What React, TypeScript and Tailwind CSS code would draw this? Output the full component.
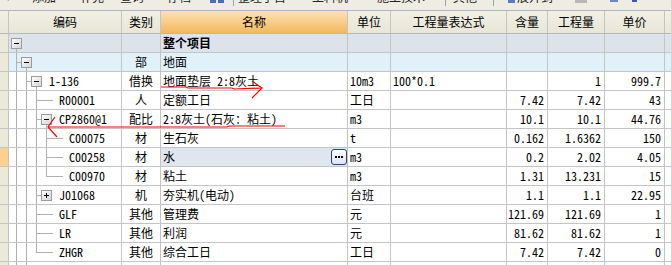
import React from 'react';

type Row = {
  level: number;
  box?: '-' | '+';
  guides: number[];
  half?: number;
  expanded?: boolean;
  code?: string;
  type?: string;
  name?: string;
  bold?: boolean;
  unit?: string;
  expr?: string;
  hl?: string;
  qty?: string;
  price?: string;
  bg?: string;
  selected?: boolean;
};

const rows: Row[] = [
  { level: 0, box: '-', guides: [], expanded: true, name: '整个项目', bold: true, bg: 'bg-[#dce3eb]' },
  { level: 1, box: '-', guides: [0], expanded: true, type: '部', name: '地面', bg: 'bg-[#e1f1f9]' },
  { level: 2, box: '-', guides: [0, 1], expanded: true, code: '1-136', type: '借换', name: '地面垫层 2:8灰土', unit: '10m3', expr: '100*0.1', qty: '1', price: '999.7' },
  { level: 3, guides: [0, 1, 2], code: 'R00001', type: '人', name: '定额工日', unit: '工日', hl: '7.42', qty: '7.42', price: '43' },
  { level: 3, box: '-', guides: [0, 1, 2], expanded: true, code: 'CP2860@1', type: '配比', name: '2:8灰土(石灰：粘土)', unit: 'm3', hl: '10.1', qty: '10.1', price: '44.76' },
  { level: 4, guides: [0, 1, 2, 3], code: 'C00075', type: '材', name: '生石灰', unit: 't', hl: '0.162', qty: '1.6362', price: '150' },
  { level: 4, guides: [0, 1, 2, 3], code: 'C00258', type: '材', name: '水', unit: 'm3', hl: '0.2', qty: '2.02', price: '4.05', selected: true },
  { level: 4, guides: [0, 1, 2], half: 3, code: 'C00970', type: '材', name: '粘土', unit: 'm3', hl: '1.31', qty: '13.231', price: '15' },
  { level: 3, box: '+', guides: [0, 1, 2], code: 'J01068', type: '机', name: '夯实机(电动)', unit: '台班', hl: '1.1', qty: '1.1', price: '22.95' },
  { level: 3, guides: [0, 1, 2], code: 'GLF', type: '其他', name: '管理费', unit: '元', hl: '121.69', qty: '121.69', price: '1' },
  { level: 3, guides: [0, 1, 2], code: 'LR', type: '其他', name: '利润', unit: '元', hl: '81.62', qty: '81.62', price: '1' },
  { level: 3, guides: [0, 1], half: 2, code: 'ZHGR', type: '其他', name: '综合工日', unit: '工日', hl: '7.42', qty: '7.42', price: '0' },
];

const G = '#b0b0b0';

function Tree({ r, id }: { r: Row; id: number }) {
  const L = r.level;
  const els: React.ReactNode[] = [];
  r.guides.forEach((l) =>
    els.push(<rect key={'g' + l} x={7 + 10 * l} y={0} width={1} height={18} fill={G} />)
  );
  if (r.half !== undefined)
    els.push(<rect key="half" x={7 + 10 * r.half} y={0} width={1} height={10} fill={G} />);
  if (L > 0) {
    const x0 = 7 + 10 * (L - 1);
    const x1 = r.box ? 2 + 10 * L : 14 + 10 * L;
    els.push(<rect key="h" x={x0} y={9} width={x1 - x0} height={1} fill={G} />);
  }
  if (r.expanded) els.push(<rect key="e" x={7 + 10 * L} y={15} width={1} height={3} fill={G} />);
  if (r.box) {
    const bx = 2 + 10 * L;
    els.push(
      <g key="box">
        <rect x={bx + 0.5} y={4.5} width={10} height={10} fill={`url(#bg${id})`} stroke="#9c9c9c" />
        <rect x={bx + 3} y={9} width={5} height={1} fill="#000" />
        {r.box === '+' && <rect x={bx + 5} y={7} width={1} height={5} fill="#000" />}
      </g>
    );
  }
  return (
    <svg className="absolute left-0 top-0" width={113} height={18} viewBox="0 0 113 18">
      <defs>
        <linearGradient id={`bg${id}`} x1="0" y1="0" x2="1" y2="1">
          <stop offset="0" stopColor="#ffffff" />
          <stop offset="1" stopColor="#d4d4d4" />
        </linearGradient>
      </defs>
      {els}
    </svg>
  );
}

const codePad = ['pl-[20px]', 'pl-[30px]', 'pl-[40px]', 'pl-[50px]', 'pl-[60px]'];

function Toolbar() {
  return (
    <div className="h-[11px] overflow-hidden border-b border-[#adb5bf] bg-[#efede3]">
      <div className="flex h-[12px] -mt-[9px] items-start leading-[12px] text-[#222]">
        <span className="ml-[6px] w-[4px] text-[#777]">‹</span>
        <span className="ml-[22px] w-[24px]">添加</span>
        <span className="ml-[24px] w-[24px]">补充</span>
        <span className="ml-[16px] w-[24px]">查询</span>
        <span className="ml-[23px] w-[24px]">存档</span>
        <span className="ml-[19px] mt-[9px] flex gap-[2px]">
          <span className="h-[3px] w-[6px] bg-[#4a6fb5]" />
          <span className="h-[3px] w-[6px] bg-[#4a6fb5]" />
        </span>
        <span className="ml-[9px] mt-[9px] h-[6px] w-[1px] bg-[#9aa4b0]" />
        <span className="ml-[4px] w-[48px]">整理子目</span>
        <span className="ml-[26px] w-[36px]">工料机</span>
        <span className="ml-[29px] w-[48px]">施工技术</span>
        <span className="ml-[20px] mt-[9px] h-[6px] w-[1px] bg-[#9aa4b0]" />
        <span className="ml-[7px] w-[24px]">其他</span>
        <span className="ml-[16px] mt-[9px] h-[6px] w-[1px] bg-[#9aa4b0]" />
        <span className="ml-[14px] mt-[9px] h-[3px] w-[7px] bg-[#5b7bbd]" />
        <span className="ml-[2px] w-[36px]">展开到</span>
        <span className="ml-[22px] mt-[9px] h-[3px] w-[12px] bg-[#b8b8b8]" />
        <span className="ml-[23px] mt-[9px] h-[2px] w-[8px] bg-[#6b88c4]" />
        <span className="ml-[14px] mt-[9px] h-[2px] w-[5px] bg-[#3a5ca8]" />
      </div>
    </div>
  );
}

function Header() {
  const c = 'shrink-0 flex items-center justify-center border-r border-[#c4c4c4]';
  return (
    <div className="flex h-[23px] border-b border-[#b8b8b8] bg-linear-to-b from-[#f2f0e6] to-[#e8e6d6]">
      <div className={`w-[9px] ${c}`} />
      <div className={`w-[113px] ${c}`}>编码</div>
      <div className={`w-[39px] ${c}`}>类别</div>
      <div className={`w-[187px] ${c} bg-linear-to-b from-[#fde2b2] to-[#f1b95c]`}>名称</div>
      <div className={`w-[43px] ${c}`}>单位</div>
      <div className={`w-[116px] ${c}`}>工程量表达式</div>
      <div className={`w-[41px] ${c}`}>含量</div>
      <div className={`w-[57px] ${c}`}>工程量</div>
      <div className={`w-[60px] ${c}`}>单价</div>
      <div className="flex-1" />
    </div>
  );
}

function BodyRow({ r, id }: { r: Row; id: number }) {
  const b = 'shrink-0 flex items-center border-r border-[#c4c4c4] h-full';
  return (
    <div className={`flex h-[19px] border-b border-[#c4c4c4] ${r.bg ?? 'bg-white'}`}>
      <div className={`w-[9px] ${b} ${r.selected ? 'bg-[#fcd08e]' : 'bg-[#ebe9d9]'}`} />
      <div className={`relative w-[113px] ${b} ${codePad[r.level]}`}>
        <Tree r={r} id={id} />
        <span className="relative">{r.code}</span>
      </div>
      <div className={`w-[39px] ${b} justify-center`}>{r.type}</div>
      <div className={`w-[187px] ${b} justify-between pl-[2px] ${r.selected ? 'bg-[#dfe6ef]' : ''}`}>
        <span className={r.bold ? 'font-bold' : ''}>{r.name}</span>
        {r.selected && (
          <span className="flex h-[16px] w-[16px] items-center justify-center gap-[1px] rounded-[3px] border border-[#24457d] bg-linear-to-b from-[#ffffff] to-[#dbe4f1]">
            <span className="h-[2px] w-[2px] bg-black" />
            <span className="h-[2px] w-[2px] bg-black" />
            <span className="h-[2px] w-[2px] bg-black" />
          </span>
        )}
      </div>
      <div className={`w-[43px] ${b} pl-[2px]`}>{r.unit}</div>
      <div className={`w-[116px] ${b} pl-[2px]`}>{r.expr}</div>
      <div className={`w-[41px] ${b} justify-end pr-[3px]`}>{r.hl}</div>
      <div className={`w-[57px] ${b} justify-end pr-[3px]`}>{r.qty}</div>
      <div className={`w-[60px] ${b} justify-end pr-[3px]`}>{r.price}</div>
      <div className="flex-1" />
    </div>
  );
}

function TailRow() {
  const b = 'shrink-0 border-r border-[#c4c4c4] h-full';
  return (
    <div className="flex h-[4px] border-b border-[#c4c4c4] bg-white">
      <div className={`w-[9px] ${b} bg-[#ebe9d9]`} />
      <div className={`relative w-[113px] ${b}`}>
        <svg className="absolute left-0 top-0" width={113} height={3}>
          <rect x={7} y={0} width={1} height={3} fill={G} />
          <rect x={17} y={0} width={1} height={3} fill={G} />
        </svg>
      </div>
      <div className={`w-[39px] ${b}`} />
      <div className={`w-[187px] ${b}`} />
      <div className={`w-[43px] ${b}`} />
      <div className={`w-[116px] ${b}`} />
      <div className={`w-[41px] ${b}`} />
      <div className={`w-[57px] ${b}`} />
      <div className={`w-[60px] ${b}`} />
      <div className="flex-1" />
    </div>
  );
}

function Annotations() {
  return (
    <svg className="pointer-events-none absolute left-0 top-0" width={671} height={265} viewBox="0 0 671 265">
      <g fill="none" stroke="#ff0000" strokeWidth={1.2}>
        <polyline points="161,87 186,87 188,88 232,88 234,89 262,88" />
        <polyline points="252,81 262,88 252,98" />
        <polyline points="55,117 48,127 57,137" />
        <polyline points="48,127 227,127 229,126 285,126" />
      </g>
    </svg>
  );
}

export default function App() {
  return (
    <div className="relative h-[265px] w-[671px] overflow-hidden bg-white text-[12px] leading-none text-black [font-family:'Noto_Sans_Mono_CJK_SC','Noto_Sans_CJK_SC',monospace]">
      <Toolbar />
      <Header />
      {rows.map((r, i) => (
        <BodyRow key={i} r={r} id={i} />
      ))}
      <TailRow />
      <Annotations />
    </div>
  );
}
